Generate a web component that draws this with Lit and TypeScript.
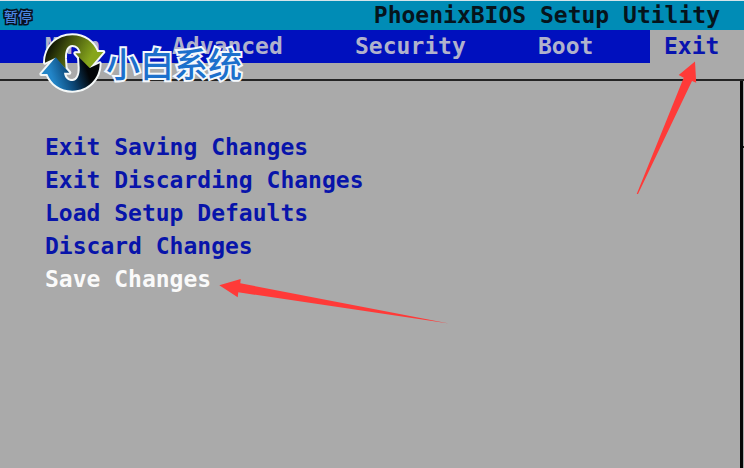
import { LitElement, html, css } from "lit";
import { customElement, state } from "lit/decorators.js";
import { classMap } from "lit/directives/class-map.js";

@customElement("site-logo")
class SiteLogo extends LitElement {
  static styles = css`
    :host {
      display: flex;
      align-items: center;
      pointer-events: none;
    }
    .mark {
      width: 68px;
      height: 64px;
      flex: none;
    }
    .name {
      font: 500 34px/40px "Noto Sans CJK SC", sans-serif;
      color: #1c70cc;
      -webkit-text-stroke: 4px #f4f8fc;
      paint-order: stroke fill;
      white-space: nowrap;
    }
  `;
  render() {
    return html`
      <svg class="mark" viewBox="21 17 204 192" aria-hidden="true">
        <defs>
          <linearGradient id="green" x1="0" y1="0" x2="1" y2="0.3">
            <stop offset="0.12" stop-color="#080c04" />
            <stop offset="0.42" stop-color="#3d4c0c" />
            <stop offset="0.9" stop-color="#86a51c" />
          </linearGradient>
          <linearGradient id="blue" x1="0" y1="0.2" x2="1" y2="0">
            <stop offset="0.1" stop-color="#2285c8" />
            <stop offset="0.4" stop-color="#0c4878" />
            <stop offset="0.72" stop-color="#020508" />
          </linearGradient>
        </defs>
        <g stroke="#f4f8f8" stroke-width="12" stroke-linejoin="round" fill="none">
          <path d="M42 112C42 65 78 30 124 30C160 30 187 50 199 80L217 80L174 130L133 84L149 84C147 67 136 59 124 59C109 59 101 76 102 100L104 130L72 98Z" />
          <path d="M206 114C206 161 170 196 124 196C88 196 61 176 49 146L31 146L74 96L115 142L99 142C101 159 112 167 124 167C139 167 147 150 146 126L144 96L176 128Z" />
        </g>
        <path d="M42 112C42 65 78 30 124 30C160 30 187 50 199 80L217 80L174 130L133 84L149 84C147 67 136 59 124 59C109 59 101 76 102 100L104 130L72 98Z" fill="url(#green)" />
        <path d="M206 114C206 161 170 196 124 196C88 196 61 176 49 146L31 146L74 96L115 142L99 142C101 159 112 167 124 167C139 167 147 150 146 126L144 96L176 128Z" fill="url(#blue)" />
      </svg>
      <span class="name">小白系统</span>
    `;
  }
}

@customElement("app-root")
class AppRoot extends LitElement {
  @state() private tab = "Exit";
  @state() private item = "Save Changes";

  private tabs = ["Main", "Advanced", "Security", "Boot", "Exit"];
  private items = [
    "Exit Saving Changes",
    "Exit Discarding Changes",
    "Load Setup Defaults",
    "Discard Changes",
    "Save Changes",
  ];

  static styles = css`
    :host {
      display: flex;
      flex-direction: column;
      position: relative;
      box-sizing: border-box;
      min-height: 100vh;
      overflow: hidden;
      border-top: 1px solid #d4e4ea;
      background: #aaaaaa;
      font: 700 23px/33px "DejaVu Sans Mono", "Liberation Mono", monospace;
    }
    button {
      border: 0;
      margin: 0;
      padding: 0;
      background: none;
      font: inherit;
      color: inherit;
      text-align: left;
      white-space: nowrap;
    }
    .title {
      display: flex;
      align-items: center;
      justify-content: space-between;
      height: 29px;
      padding: 0 24px 0 4px;
      background: #008cb6;
      color: #06141c;
    }
    h1 {
      margin: 0;
      font: inherit;
      line-height: 29px;
      white-space: nowrap;
    }
    .pause {
      font: 500 14px/28px "Noto Sans CJK SC", sans-serif;
      color: #4a86e0;
      -webkit-text-stroke: 3px #06121e;
      paint-order: stroke fill;
    }
    .tabs {
      display: grid;
      grid-template-columns: 127fr 183fr 183fr 112fr 94fr;
      padding-left: 45px;
      margin-bottom: 16px;
      background: #0010be;
      color: #b0b2cc;
    }
    .tab.active {
      padding-left: 14px;
      background: #aaaaaa;
      color: #0814b0;
    }
    .body {
      display: flex;
      flex: 1;
      border-top: 2px solid #242424;
    }
    main {
      flex: 1;
      padding: 50px 45px;
    }
    .menu {
      display: flex;
      flex-direction: column;
      align-items: flex-start;
      list-style: none;
      margin: 0;
      padding: 0;
      color: #0814aa;
    }
    .item {
      display: block;
    }
    .item.active {
      color: #fafafa;
    }
    .help {
      width: 1px;
      padding-top: 65px;
      border-left: 3px solid #060606;
    }
    .rule {
      margin: 0;
      border: 0;
      border-top: 2px solid #181818;
    }
    site-logo {
      position: absolute;
      left: 38px;
      top: 30px;
    }
    .arrow {
      position: absolute;
      fill: #ff3a38;
      pointer-events: none;
    }
    .to-exit {
      right: 46px;
      top: 60px;
      width: 62px;
      height: 135px;
    }
    .to-save {
      left: 218px;
      top: 277px;
      width: 232px;
      height: 48px;
    }
  `;

  render() {
    return html`
      <header class="title">
        <span class="pause">暂停</span>
        <h1>PhoenixBIOS Setup Utility</h1>
      </header>
      <nav class="tabs">
        ${this.tabs.map(
          (t) => html`<button
            class=${classMap({ tab: true, active: t === this.tab })}
            @click=${() => (this.tab = t)}
          >${t}</button>`
        )}
      </nav>
      <div class="body">
        <main>
          <ul class="menu">
            ${this.items.map(
              (i) => html`<li><button
                class=${classMap({ item: true, active: i === this.item })}
                @click=${() => (this.item = i)}
              >${i}</button></li>`
            )}
          </ul>
        </main>
        <aside class="help"><hr class="rule" /></aside>
      </div>
      <site-logo></site-logo>
      <svg class="arrow to-exit" viewBox="636 61 62 135" aria-hidden="true">
        <path d="M695 61.5L678.7 75L683.7 77.7L636.7 194L638 194L692 81L696.2 82.7Z" />
      </svg>
      <svg class="arrow to-save" viewBox="218 278 232 48" aria-hidden="true">
        <path d="M219.3 285.3L240.7 279L240.3 283.3L449 323.5L238.3 292.3L237.7 297.3Z" />
      </svg>
    `;
  }
}
